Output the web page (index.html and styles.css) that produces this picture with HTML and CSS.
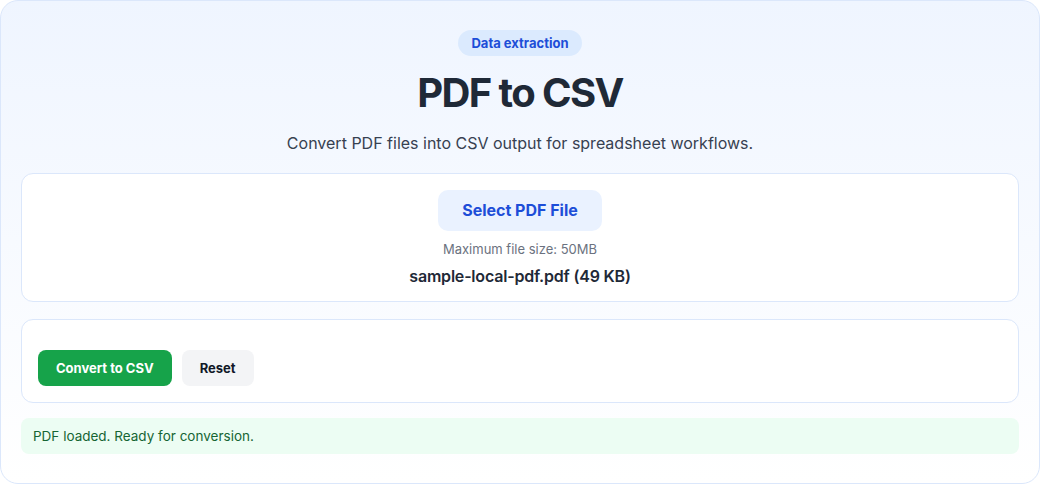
FILE: index.html
```html
<!DOCTYPE html>
<html lang="en">
<head>
<meta charset="utf-8">
<title>PDF to CSV</title>
<link rel="stylesheet" href="styles.css">
</head>
<body>
<main class="tool">
  <header class="tool-header">
    <span class="badge">Data extraction</span>
    <h1 class="title">PDF to CSV</h1>
    <p class="subtitle">Convert PDF files into CSV output for spreadsheet workflows.</p>
  </header>
  <section class="panel upload">
    <button class="btn-select" type="button">Select PDF File</button>
    <p class="hint">Maximum file size: 50MB</p>
    <p class="filename">sample-local-pdf.pdf (49 KB)</p>
  </section>
  <section class="panel actions">
    <button class="btn btn-primary" type="button">Convert to CSV</button>
    <button class="btn btn-secondary" type="button">Reset</button>
  </section>
  <div class="status">PDF loaded. Ready for conversion.</div>
</main>
</body>
</html>
```
FILE: styles.css
```css
* { box-sizing: border-box; }
html, body { margin: 0; padding: 0; background: #ffffff; }
body { font-family: Inter, "Noto Sans", "Liberation Sans", sans-serif; color: #1f2937; }

.tool {
  width: 1040px;
  height: 484px;
  border: 1px solid #dbe7fb;
  border-radius: 18px;
  background: linear-gradient(180deg, #eff5ff 0%, #ffffff 100%);
  padding: 29px 20px 20px;
  display: flex;
  flex-direction: column;
}

.tool-header {
  display: flex;
  flex-direction: column;
  align-items: center;
}

.badge {
  display: inline-block;
  background: #dbeafe;
  color: #1d4ed8;
  font-size: 13px;
  font-weight: 700;
  line-height: 16px;
  padding: 5px 13px;
  border-radius: 999px;
}

.title {
  margin: 13px 0 0;
  font-size: 40px;
  line-height: 48px;
  font-weight: 700;
  color: #1f2937;
  letter-spacing: -1.6px;
}

.subtitle {
  margin: 14px 0 0;
  font-size: 16px;
  line-height: 24px;
  color: #374151;
}

.panel {
  background: #ffffff;
  border: 1px solid #dbe7fb;
  border-radius: 12px;
}

.upload {
  margin-top: 18px;
  padding: 16px 16px 14px;
  display: flex;
  flex-direction: column;
  align-items: center;
}

.btn-select {
  font-family: inherit;
  font-size: 16px;
  font-weight: 700;
  line-height: 23px;
  color: #1d4ed8;
  background: #eaf2ff;
  border: none;
  border-radius: 10px;
  padding: 9px 24px;
}

.hint {
  margin: 10px 0 0;
  font-size: 13px;
  line-height: 16px;
  color: #6b7280;
}

.filename {
  margin: 8px 0 0;
  font-size: 16px;
  line-height: 22px;
  font-weight: 600;
  letter-spacing: -0.2px;
  color: #1f2937;
}

.actions {
  margin-top: 17px;
  padding: 30px 16px 16px;
  display: flex;
  gap: 10px;
}

.btn {
  font-family: inherit;
  font-size: 13px;
  font-weight: 700;
  line-height: 18px;
  border: none;
  border-radius: 8px;
  padding: 9px 18px;
}

.btn-primary { background: #16a34a; color: #ffffff; }
.btn-secondary { background: #f3f4f6; color: #111827; }

.status {
  margin-top: 15px;
  background: #ecfdf3;
  color: #166534;
  font-size: 13.5px;
  line-height: 20px;
  padding: 8px 12px;
  border-radius: 8px;
}
```
